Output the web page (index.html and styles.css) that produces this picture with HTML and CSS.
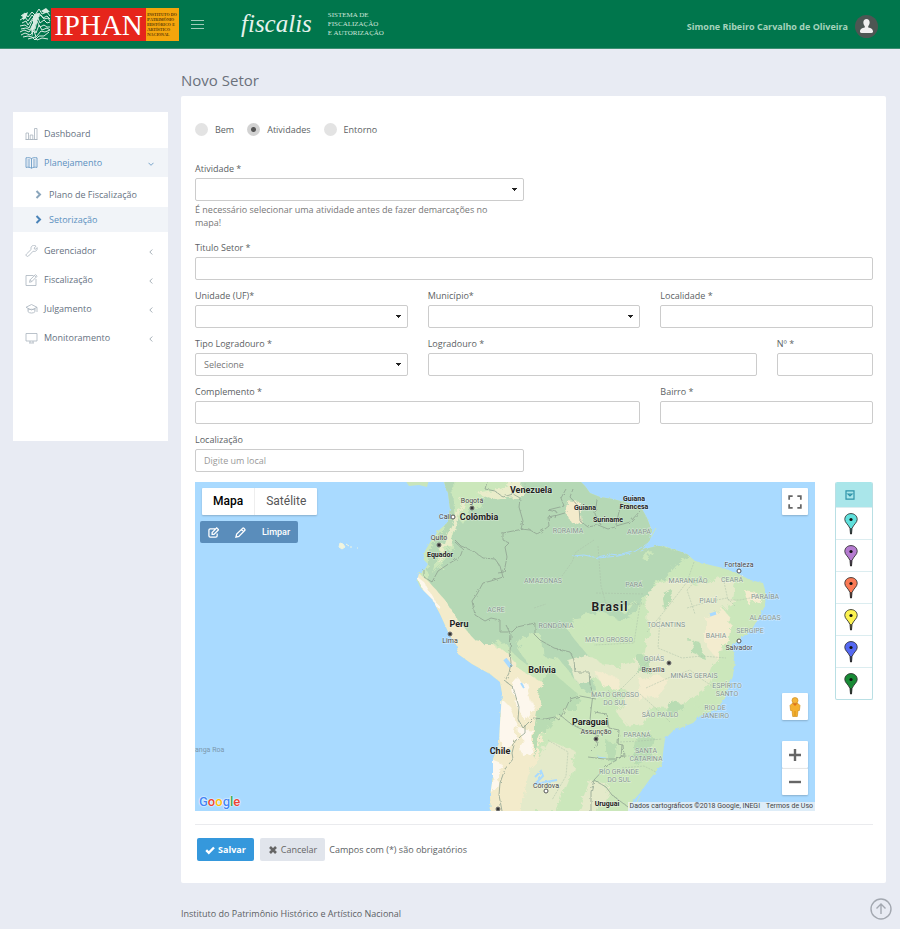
FILE: index.html
```html
<!DOCTYPE html>
<html lang="pt-BR">
<head>
<meta charset="utf-8">
<title>Novo Setor</title>
<link rel="stylesheet" href="styles.css">
</head>
<body>
<header class="topbar">
  <a class="brand" href="#" aria-label="IPHAN">
    <svg class="crest" viewBox="0 0 31 33" aria-hidden="true">
      <g fill="none" stroke="#d9ebe2" stroke-width="1">
        <path d="M1 8l4-3 3 4 4-5 3 3 4-6 3 5 5-2 3 4"/>
        <path d="M0 12l5-3 3 4 4-6 4 4 3-6 4 5 4-2 3 3"/>
        <path d="M2 15l4-2 2 4 5-7M18 9l3-2 3 4 4-1 2 3"/>
        <path d="M0 18l5-1 4 3 3-7 3-4 3 1 2 5 4-3 3 3 3-1"/>
        <path d="M1 21l5-1 4 2 3-6 2 5 2-8 3 6 4-2 3 2 3 0"/>
        <path d="M0 24l4-2 5 2 4-5 3 6 3-8 3 5 5-2 3 2"/>
        <path d="M1 27l4-2 5 2 4-4 2 6 5-6 4 1 5-2"/>
        <path d="M3 29l5-1 4 1 3 3 4-4 5 0 5-4"/>
        <path d="M8 31l7-2 2 3 5-2 6 1"/>
      </g>
      <path d="M13 8l4-3 3 1-2 5-4 10-2 8-1-9 2-5zM21 3l5-3 4 4-6 1zM2 7l6-3-2 6-3 2z" fill="#d9ebe2"/>
    </svg>
    <span class="brand-name">IPHAN</span>
    <span class="brand-full">Instituto do<br>Patrimônio<br>Histórico e<br>Artístico<br>Nacional</span>
  </a>
  <button class="menu-toggle" type="button" aria-label="Menu"><span></span><span></span><span></span></button>
  <span class="product">fiscalis</span>
  <span class="product-full">SISTEMA DE<br>FISCALIZAÇÃO<br>E AUTORIZAÇÃO</span>
  <a class="user" href="#">
    <span>Simone Ribeiro Carvalho de Oliveira</span>
    <svg viewBox="0 0 24 24" aria-hidden="true"><circle cx="12" cy="12" r="12" fill="#4d5653"/><path d="M12 4.300c2 0 3.300 1.400 3.300 3.400 0 1.600-.7 3-1.500 3.800v1.500c2.700.6 5 1.500 5 4.300 0 1-.6 1.500-1.500 1.500H6.700c-.9 0-1.500-.5-1.500-1.500 0-2.800 2.300-3.700 5-4.300v-1.500c-.8-.8-1.500-2.200-1.500-3.800 0-2 1.300-3.400 3.300-3.400z" fill="#efefef"/></svg>
  </a>
</header>

<div class="layout">
  <nav class="sidebar">
    <a class="item" href="#">
      <svg viewBox="0 0 12 12"><path d="M.5 5h2.500v6.500H.5zM4.700 7h2.600v4.500H4.700zM9 .5h2.500v11H9zM0 11.500h12"/></svg>
      <span>Dashboard</span></a>
    <a class="item active" href="#">
      <svg viewBox="0 0 12 12"><path d="M6 1.500C4.500.6 2.500.5.500.8v9.600c2-.3 4-.2 5.500.8 1.500-1 3.500-1.100 5.500-.8V.8C9.500.5 7.500.6 6 1.500zM6 1.500v9.700M2 3h2.500M2 5h2.500M2 7h2.500M2 9h2.500M7.500 3H10M7.500 5H10M7.500 7H10M7.500 9H10"/></svg>
      <span>Planejamento</span>
      <svg class="arrow" viewBox="0 0 6 6"><path d="M.5 1.800L3 4.300l2.500-2.500"/></svg></a>
    <div class="submenu">
      <a class="subitem" href="#"><svg viewBox="0 0 7 9"><path d="M1.500 1L5 4.500 1.500 8"/></svg><span>Plano de Fiscalização</span></a>
      <a class="subitem current" href="#"><svg viewBox="0 0 7 9"><path d="M1.500 1L5 4.500 1.500 8"/></svg><span>Setorização</span></a>
    </div>
    <a class="item" href="#">
      <svg viewBox="0 0 12 12"><path d="M10.500 1.200L8.700 3l.3 1 1 .3 1.600-1.700c.4 1.500-.2 3-1.600 3.600-.8.400-1.700.3-2.400 0L3 11c-.6.600-1.400.6-2 0s-.6-1.400 0-2l4.700-4.600c-.6-1.500 0-3 1.300-3.700 1.100-.6 2.400-.4 3.500.5z"/></svg>
      <span>Gerenciador</span>
      <svg class="arrow" viewBox="0 0 6 6"><path d="M4.300.5L1.800 3l2.500 2.500"/></svg></a>
    <a class="item" href="#">
      <svg viewBox="0 0 12 12"><path d="M8 1.500H.5v10h10V5M4 8.300l.6-2.500L10 .6l1.600 1.600-5.300 5.400zM4.700 5.800l1.600 1.700M9 1.600l1.600 1.600"/></svg>
      <span>Fiscalização</span>
      <svg class="arrow" viewBox="0 0 6 6"><path d="M4.300.5L1.800 3l2.500 2.500"/></svg></a>
    <a class="item" href="#">
      <svg viewBox="0 0 12 12"><path d="M6 1.500L.5 4.300 6 7l5.500-2.700zM2.500 5.500v3.200C4 10.500 8 10.500 9.500 8.700V5.500M11.500 4.300V9M2.500 7c2-1 5-1 7 0"/></svg>
      <span>Julgamento</span>
      <svg class="arrow" viewBox="0 0 6 6"><path d="M4.300.5L1.800 3l2.500 2.500"/></svg></a>
    <a class="item" href="#">
      <svg viewBox="0 0 12 12"><path d="M.5 1.500h11v7.500H.5zM4.500 9v1.800M7.500 9v1.800M3.500 11h5"/></svg>
      <span>Monitoramento</span>
      <svg class="arrow" viewBox="0 0 6 6"><path d="M4.300.5L1.800 3l2.500 2.500"/></svg></a>
  </nav>

  <main class="content">
    <h1>Novo Setor</h1>
    <form class="card">
      <div class="radios">
        <label><input type="radio" name="tipo">Bem</label>
        <label><input type="radio" name="tipo" checked>Atividades</label>
        <label><input type="radio" name="tipo">Entorno</label>
      </div>
      <div class="fields">
        <div class="field c6 row-end">
          <label for="atividade">Atividade *</label>
          <select id="atividade"><option></option></select>
          <p class="help">É necessário selecionar uma atividade antes de fazer demarcações no mapa!</p>
        </div>
        <div class="field c12"><label for="titulo">Titulo Setor *</label><input id="titulo" type="text"></div>
        <div class="field c4"><label for="uf">Unidade (UF)*</label><select id="uf"><option></option></select></div>
        <div class="field c4"><label for="municipio">Município*</label><select id="municipio"><option></option></select></div>
        <div class="field c4"><label for="localidade">Localidade *</label><input id="localidade" type="text"></div>
        <div class="field c4"><label for="tipolog">Tipo Logradouro *</label><select id="tipolog"><option>Selecione</option></select></div>
        <div class="field c6"><label for="logradouro">Logradouro *</label><input id="logradouro" type="text"></div>
        <div class="field c2"><label for="numero">Nº *</label><input id="numero" type="text"></div>
        <div class="field c8"><label for="complemento">Complemento *</label><input id="complemento" type="text"></div>
        <div class="field c4"><label for="bairro">Bairro *</label><input id="bairro" type="text"></div>
        <div class="field c6"><label for="local">Localização</label><input id="local" type="text" placeholder="Digite um local"></div>
      </div>

      <div class="map-row">
        <div class="map">
          <svg class="map-canvas" viewBox="195 482 620 329" preserveAspectRatio="xMidYMid slice">
            <defs>
              <clipPath id="land"><path id="coast" d="M443 480L448 493 450 509 447 523 438 531 432 539 425 551 423 559 428 564 425 569 419 574 417 580 420 587 432 599 440 614 450 636 457 646 458 654 472 664 490 674 500 682 502 693 500 723 499 743 493 759 493 776 490 796 491 813H627L633 801 640 793 650 779 662 764 663 753 665 739 673 731 693 723 700 716 717 709 725 698 728 689 733 676 735 659 732 646 740 639 752 629 758 619 765 606 766 593 763 583 750 580 737 573 723 568 710 565 695 561 687 554 670 548 660 545 649 548 640 552 650 540 652 531 647 518 642 509 628 503 613 499 600 497 590 493 585 486 579 480Z"/></clipPath>
              <filter id="rough" x="-5%" y="-5%" width="110%" height="110%"><feTurbulence type="fractalNoise" baseFrequency=".09" numOctaves="3" seed="4"/><feDisplacementMap in="SourceGraphic" scale="11"/></filter>
              <filter id="shore" x="-2%" y="-2%" width="104%" height="104%"><feTurbulence type="fractalNoise" baseFrequency=".25" numOctaves="2" seed="8"/><feDisplacementMap in="SourceGraphic" scale="3"/></filter>
            </defs>
            <rect x="195" y="482" width="620" height="329" fill="#a9daff"/>
            <path d="M405 480h24l-2 7-8-2-10 1z" fill="#c9e5bb"/>
            <g filter="url(#shore)"><g clip-path="url(#land)">
              <rect x="410" y="480" width="370" height="332" fill="#cbe7bb"/>
              <g filter="url(#rough)">
                <path fill="#b5d8b5" d="M442 470H660V545L690 555 676 566 664 580 650 588 640 600 636 614 618 620 600 612 585 618 566 628 575 640 592 660 596 690 584 692 560 660 540 655 528 666 512 652 505 642 480 646 460 622 440 600 428 580 430 545 445 525Z"/>
                <path fill="#cbe7bb" d="M452 470h68l-5 18-30 6-14 16-8 14-10-12zM528 632l14 4 2 26-16 2-11-16zM455 530l-14 18-8 26 9-8 10-20z"/>
                <path fill="#e9ecca" d="M494 500l28-4 2-14-12-1-14 8-22 4zM462 500l3 0-14 42-14 22 8-24z"/>
                <path fill="#f3ebcb" d="M566 500l14 2 2 24-10-3-7-13zM415 570l14 12 16 18 12 20 20 22 20 4 14 10 6 12 32 18-2 38-8 30-2 30-6 30H485V690L460 668 430 610z"/>
                <path fill="#fdf7ed" d="M415 575l10 8 14 24-8-2zM512 682l14-1 8 30-7 12-12-20zM500 700l10 6 8 20-4 16-10 12-6-20zM519 728l14 2-2 24-8 2zM492 760l10 4-8 30-5-5z"/>
                <path fill="#e4eaca" d="M646 590l30-12 20 8 22-8 18 6-4 20-18 8 8 18 2 26-12 28-16 10-16 14-26-2-12 18-16 2-8-14 12-20-30-12-24 2-6-20 20-6 14 8 20 2 20-8 4-26zM550 740l26 12-6 26-14 34h-36l8-36zM590 780l20 6-14 30h-20z"/>
                <path fill="#f3eccf" d="M706 618l16-10 8 10-2 20-10 22-12-14zM640 680l18-6 12 8-12 14-20 4zM744 590l12 2 6 10-14 2zM596 672l20 4 4 14-18-4z"/>
                <path fill="#b9dcb3" d="M548 668l18 16 14 12-4 14-14 0-18 22-10 26 0-36 6-30zM640 655l12 4-4 14-10 0zM670 700l14 4-10 14-8-8zM636 738l18-2-4 22-16 6zM606 742l12 2-2 18-10-4zM660 596l12-6 2 12-12 6zM690 640l10 2 4 16-12-4z"/>
                <path fill="#cbe7bb" d="M570 618l20-4 6 6-18 6zM592 638l14-2 14 8-20 4zM608 606l14 2 14-8-10 14zM640 556l14-3-6 10zM720 652l14-2-4 26-8 14-16 18-14 2 14-22z"/>
              </g>
              <g fill="none" stroke="#a9daff" stroke-width="1"><path d="M572 556l12-1 14 3 20-2 16-4 16-10"/><path d="M598 557l12-3 8 1 14-4"/><path d="M535 777l6-6 2 5-8 8 22-4" stroke-width="2"/><path d="M505 659l6 8" stroke-width="4"/><path d="M521 683l3 5" stroke-width="2"/><path d="M710 615l6-2" stroke-width="3"/><path d="M598 757l8 1"/></g>
            </g></g>
            <path d="M634 808l6-12M656 528l-5 9" stroke="#cbe7bb" fill="none"/>
            <g class="borders" filter="url(#shore)">
              <path d="M487 482l-2 7 10 2 8 6 10-3 7 4-1 9 4 14-2 8 9 1 7 4 8-5 4-3-1-9 10-2 10-3"/>
              <path d="M555 518l2-6-9-2 16-4-3-8 5-9M573 489l-3 8 9 10 1 14 8 6 10-2 10 4 7-2M597 500l-2 14 5 10M621 503l-5 22M616 526l14-4 11-12"/>
              <path d="M523 529l-20 4v7l6 3-4 4 2 10-3 15-6 1M455 540l6 6 14 6 8 6 12 1 5 7 3 11-12 4-8 2-6 11-5 7 3 14 10 6 6-3 9 2v12h12l5-5 18-4v12l5 5 14 8 16 4 4 8 1 12h14l1 12 3 10-2 16-1 10"/>
              <path d="M424 570v7l8 5 6-11 12-8 10-6 3-8-8-7"/>
              <path d="M506 625l5 10-1 16 1 12-2 10-4 8 8 6 6 20-1 12 5 9 10-10 12 1 10-2 4 3 7-12 4-9 10-3 16 3"/>
              <path d="M525 725v8l-10 8-3 12 1 6-8 10-5 14-1 12 3 16M559 714l12 10 8 4 20 8M594 712l13 2 2 14 10 2-1 14 5 1 1 11-8 3-12 0-16-2M598 736l-2 10-6 6M622 745l-1 12-14 9-13 14M594 780l-3 12v20M594 780l12 7 6 8 16 12"/>
            </g>
            <g class="state-borders">
              <path d="M525 480v10M534 608l12-4M596 593l48 1M598 546l3 40 5 18 38 0M640 605l-2 12-4 26-40 2M594 540l-18 12-4 10-10 14M694 562l-7 20-20 26-20 24M700 576l-13 14 8 24M687 608l20-6 20-4 8 8M724 582l4 18 12 0 20-4M660 618l-2 30 24 10 20-2 24 2M646 688l22-10 22-8 10 8 18 12M652 658l-14 14-20 20M640 694l22 20 8 8M608 690l16 16M620 742l20-1 22-2M622 756l18 0 22 2M622 768l22-2 12 6M548 740l20 12-2 24-14 24"/>
            </g>
            <path d="M340 543l3 1 2 3-3 2-3-2zM346 544l3 2M350 547h2M357 548h1" fill="#f1f5df" stroke="#f1f5df"/>
            <g class="dots">
              <circle cx="472" cy="508" r="2"/><circle cx="439" cy="545" r="2"/><circle cx="450" cy="634" r="2"/><circle cx="669" cy="663" r="2"/><circle cx="596" cy="739" r="2"/><circle cx="498" cy="809" r="2"/>
            </g>
            <g class="rings"><circle cx="453" cy="517" r="2"/><circle cx="739" cy="571" r="2"/><circle cx="739" cy="641" r="2"/><circle cx="546" cy="791" r="2"/></g>
            <g class="state"><text x="568" y="533">RORAIMA</text><text x="639" y="534">AMAPÁ</text><text x="543" y="583">AMAZONAS</text><text x="634" y="587">PARÁ</text><text x="688" y="583">MARANHÃO</text><text x="732" y="582">CEARÁ</text><text x="708" y="603">PIAUÍ</text><text x="765" y="599">PARAÍBA</text><text x="496" y="612">ACRE</text><text x="765" y="620">ALAGOAS</text><text x="750" y="633">SERGIPE</text><text x="556" y="628">RONDÔNIA</text><text x="666" y="627">TOCANTINS</text><text x="716" y="638">BAHIA</text><text x="609" y="642">MATO GROSSO</text><text x="654" y="661">GOIÁS</text><text x="694" y="678">MINAS GERAIS</text><text x="727" y="688">ESPÍRITO</text><text x="727" y="696">SANTO</text><text x="615" y="697">MATO GROSSO</text><text x="615" y="705">DO SUL</text><text x="715" y="710">RIO DE</text><text x="715" y="718">JANEIRO</text><text x="660" y="717">SÃO PAULO</text><text x="637" y="737">PARANÁ</text><text x="646" y="753">SANTA</text><text x="646" y="761">CATARINA</text><text x="619" y="774">RIO GRANDE</text><text x="619" y="782">DO SUL</text></g>
            <g class="city"><text x="472" y="503">Bogotá</text><text x="445" y="519">Cali</text><text x="439" y="540">Quito</text><text x="450" y="643">Lima</text><text x="653" y="672">Brasília</text><text x="739" y="567">Fortaleza</text><text x="739" y="650">Salvador</text><text x="596" y="734">Assunção</text><text x="546" y="788">Córdova</text></g>
            <g class="country"><text x="531" y="493">Venezuela</text><text x="479" y="520">Colômbia</text><text x="459" y="627">Peru</text><text x="542" y="673">Bolívia</text><text x="590" y="725">Paraguai</text><text x="500" y="754">Chile</text></g>
            <g class="country small"><text x="585" y="510">Guiana</text><text x="634" y="501">Guiana</text><text x="634" y="509">Francesa</text><text x="608" y="522">Suriname</text><text x="440" y="557">Equador</text><text x="607" y="806">Uruguai</text></g>
            <text class="home" x="610" y="611">Brasil</text>
            <text class="faint" x="195" y="752">anga Roa</text>
          </svg>
          <div class="map-type"><button type="button" class="on">Mapa</button><button type="button">Satélite</button></div>
          <div class="draw-tools">
            <button type="button" aria-label="Editar"><svg viewBox="0 0 12 12"><path d="M8 2H2.500C1.500 2 1 2.500 1 3.500v6c0 1 .5 1.500 1.500 1.500h6c1 0 1.500-.5 1.500-1.500V7M4.500 8V6L9.500 1l2 2-5 5z"/></svg></button>
            <button type="button" aria-label="Desenhar"><svg viewBox="0 0 12 12"><path d="M1 11l.8-3.200L8.500 1.200c.7-.7 3 1.600 2.300 2.300L4.200 10.200zM7 2.700L9.300 5"/></svg></button>
            <button type="button">Limpar</button>
          </div>
          <button type="button" class="ctl full" aria-label="Tela cheia"><svg viewBox="0 0 12 12"><path d="M1 4V1h3M8 1h3v3M11 8v3H8M4 11H1V8"/></svg></button>
          <div class="ctl-stack">
            <button type="button" class="ctl" aria-label="Street View"><svg class="pegman" viewBox="0 0 12 20"><circle cx="6" cy="3.500" r="3" fill="#f5b53b" stroke="#c98613" stroke-width=".6"/><path d="M3 6.500h6l2 2-.6 5H9l-.7 6H3.700L3 13.500H1.600L1 8.500z" fill="#f5b02e" stroke="#c98613" stroke-width=".6"/><path d="M3.500 6.500h5L6 9z" fill="#e0701a" stroke="none"/><path d="M6 14v5" stroke="#c98613" stroke-width=".7"/></svg></button>
            <div class="zoom">
              <button type="button" class="ctl" aria-label="Aumentar"><svg viewBox="0 0 12 12"><path d="M6 0v12M0 6h12"/></svg></button>
              <button type="button" class="ctl" aria-label="Diminuir"><svg viewBox="0 0 12 12"><path d="M0 6h12"/></svg></button>
            </div>
          </div>
          <span class="google"><b>G</b><b>o</b><b>o</b><b>g</b><b>l</b><b>e</b></span>
          <div class="credits"><span>Dados cartográficos ©2018 Google, INEGI</span><a href="#">Termos de Uso</a></div>
        </div>
        <div class="palette">
          <svg class="defs"><symbol id="pin" viewBox="0 0 14 22"><path d="M7 .6c3.700 0 6.200 2.500 6.200 5.900 0 3.100-3.700 5.100-5.200 9L7.500 21h-1L6 15.500c-1.500-3.900-5.200-5.900-5.200-9C.8 3.100 3.300.6 7 .6z" stroke="#333" stroke-width=".9"/><path d="M7 15v6" stroke="#222" stroke-width="1.200"/><circle cx="7" cy="6.500" r="1.600" fill="#111"/></symbol></svg>
          <button type="button" class="palette-head" aria-label="Recolher"><svg viewBox="0 0 10 10"><path d="M1 .8h8v8.400H1zM3 4h4L5 6z"/></svg></button>
          <button type="button" aria-label="Ciano"><svg class="cyan"><use href="#pin"/></svg></button>
          <button type="button" aria-label="Roxo"><svg class="purple"><use href="#pin"/></svg></button>
          <button type="button" aria-label="Laranja"><svg class="orange"><use href="#pin"/></svg></button>
          <button type="button" aria-label="Amarelo"><svg class="yellow"><use href="#pin"/></svg></button>
          <button type="button" aria-label="Azul"><svg class="blue"><use href="#pin"/></svg></button>
          <button type="button" aria-label="Verde"><svg class="green"><use href="#pin"/></svg></button>
        </div>
      </div>

      <div class="actions">
        <button class="btn save" type="button"><svg viewBox="0 0 10 10"><path d="M1.200 5.200l2.600 2.600L9 2.500" stroke-width="2.400"/></svg>Salvar</button>
        <button class="btn cancel" type="button"><svg viewBox="0 0 10 10"><path d="M2 2l6 6M8 2L2 8" stroke-width="2.600"/></svg>Cancelar</button>
        <span>Campos com (*) são obrigatórios</span>
      </div>
    </form>
  </main>
</div>
<footer class="footer">
  <span>Instituto do Patrimônio Histórico e Artístico Nacional</span>
  <a href="#" aria-label="Voltar ao topo"><svg viewBox="0 0 22 22"><circle cx="11" cy="11" r="10"/><path d="M11 16V6M6.500 10.500L11 6l4.500 4.500"/></svg></a>
</footer>
</body>
</html>
```
FILE: styles.css
```css
* { box-sizing: border-box; }
body {
  margin: 0;
  background: #e8ebf3;
  color: #5c5f64;
  font: 9px/13px "Open Sans", sans-serif;
}
a { color: inherit; text-decoration: none; }
button, input, select { font: inherit; color: inherit; margin: 0; }
button { border: 0; padding: 0; background: none; cursor: pointer; }
svg { display: block; flex: none; }

.topbar {
  display: flex;
  align-items: center;
  height: 49px;
  padding: 0 22px 0 20px;
  background: #00764c;
  border-bottom: 1px solid #3c8f72;
}
.brand { display: flex; align-items: center; }
.crest { width: 31px; height: 33px; }
.brand-name {
  height: 33px;
  width: 95px;
  background: #e6251c;
  color: #fff;
  font: 29px/34px "Liberation Serif", serif;
  text-align: center;
}
.brand-full {
  width: 33px;
  height: 33px;
  padding: 4px 1px;
  background: #f4a50c;
  color: #5c3a08;
  font: small-caps bold 5px/5px "Liberation Serif", serif;
  white-space: nowrap;
}
.menu-toggle { display: grid; gap: 3px; width: 13px; margin-left: 12px; }
.menu-toggle span { height: 1px; background: #9fcbb9; }
.product { margin-left: 37px; color: #e6f2ec; font: italic 25px/32px "Liberation Serif", serif; }
.product-full { margin-left: 16px; color: #cfe5db; font: 7px/9px "Liberation Serif", serif; }
.user { display: flex; align-items: center; gap: 7px; margin: 5px 0 0 auto; color: #a5d3bd; font-weight: 700; }
.user svg { width: 23px; height: 23px; }

.layout { display: flex; align-items: flex-start; gap: 13px; padding: 22px 14px 0 13px; }
.sidebar { flex: 0 0 155px; min-height: 329px; margin-top: 41px; padding-top: 7px; background: #fff; color: #66727f; }
.item { display: flex; align-items: center; gap: 6px; height: 29px; padding: 0 14px 0 12px; }
.item svg { width: 13px; height: 12px; fill: none; stroke: #a9b4be; stroke-width: .8; }
.item .arrow { width: 6px; height: 6px; margin: 2px 0 0 auto; stroke: #8e9aa5; }
.active, .current { background: #f1f4f8; color: #5b90bf; }
.item.active svg, .item.active .arrow { stroke: #5b90bf; }
.submenu { padding: 5px 0 4px; }
.subitem { display: flex; align-items: center; gap: 7px; height: 25px; padding-left: 22px; }
.subitem svg { width: 7px; height: 9px; fill: none; stroke: #8aa5bb; stroke-width: 2; }
.current svg { stroke: #4a83b8; }

.content { flex: 1; min-width: 0; }
h1 { margin: 0; font-size: 15px; line-height: 19px; font-weight: 400; color: #6b717c; }
.card { margin-top: 6px; padding: 26px 13px 22px 14px; background: #fff; border-radius: 2px; }
.radios { display: flex; gap: 13px; height: 14px; }
.radios label { display: flex; align-items: center; gap: 7px; }
.radios input { appearance: none; width: 13px; height: 13px; border-radius: 50%; background: #e3e3e3; }
.radios input:checked { background: radial-gradient(circle, #555 0 2px, #d2d2d2 3px); }

.fields { display: grid; grid-template-columns: repeat(12, 1fr); gap: 10px 20px; margin-top: 26px; }
.field { display: flex; flex-direction: column; gap: 2px; min-width: 0; }
.field label { line-height: 14px; }
.c2 { grid-column: span 2; }
.c4 { grid-column: span 4; }
.c6 { grid-column: span 6; }
.c8 { grid-column: span 8; }
.c12 { grid-column: span 12; }
.field input, .field select {
  width: 100%;
  height: 23px;
  margin-bottom: -1px;
  padding: 0 8px;
  border: 1px solid #ccc;
  border-radius: 2px;
  background: #fff;
  color: #777;
}
.field select {
  appearance: none;
  background: linear-gradient(#222, #222) no-repeat right 6px top 9px / 5px 1px,
    linear-gradient(#222, #222) no-repeat right 7px top 10px / 3px 1px,
    linear-gradient(#222, #222) no-repeat right 8px top 11px / 1px 1px, #fff;
}
.field ::placeholder { color: #999; opacity: 1; }
.help { margin: 1px 0 2px; padding-right: 20px; color: #777; }

.map-row { display: flex; align-items: flex-start; gap: 20px; margin-top: 11px; }
.map { position: relative; flex: 1; min-width: 0; height: 329px; overflow: hidden; font-family: Roboto, sans-serif; }
.map-canvas { width: 100%; height: 100%; font-family: Roboto, sans-serif; }
.map-canvas text { text-anchor: middle; fill: #444; stroke: #fff; stroke-opacity: .5; stroke-width: 1; paint-order: stroke; }
.map-canvas .country text { font-size: 9px; font-weight: 700; fill: #222; }
.map-canvas .small text { font-size: 7px; }
.map-canvas .home { font-size: 12px; font-weight: 700; fill: #222; letter-spacing: 1px; }
.map-canvas .city text { font-size: 7px; }
.map-canvas .state text { font-size: 7px; fill: #84938d; }
.map-canvas .faint { font-size: 7px; fill: #7c98ad; text-anchor: start; stroke: none; }
.borders { fill: none; stroke: #8fa291; stroke-width: .8; }
.state-borders { fill: none; stroke: #a8bea6; stroke-width: .5; stroke-dasharray: 2 1; }
.dots circle { fill: #333; stroke: #777; stroke-width: 1; }
.rings circle { fill: #fff; stroke: #555; stroke-width: 1; }

.map-type { position: absolute; top: 6px; left: 7px; display: flex; height: 27px; background: #fff; border-radius: 1px; box-shadow: 0 1px 2px #0003; font-size: 12px; color: #565656; }
.map-type button { padding: 0 11px; }
.map-type .on { color: #000; font-weight: 500; border-right: 1px solid #eee; }
.draw-tools { position: absolute; top: 39px; left: 5px; display: flex; align-items: center; gap: 16px; height: 22px; padding: 0 8px; background: #5a8dbb; border-radius: 2px; color: #fff; font-size: 9px; font-weight: 500; }
.draw-tools svg { width: 11px; height: 11px; fill: none; stroke: #fff; stroke-width: 1.4; }
.ctl { display: grid; place-items: center; width: 26px; height: 27px; background: #fff; border-radius: 1px; box-shadow: 0 1px 2px #0003; }
.ctl svg { width: 12px; height: 12px; fill: none; stroke: #666; stroke-width: 2.400; }
.ctl .pegman { width: 12px; height: 20px; }
.full { position: absolute; top: 6px; right: 7px; }
.full svg { width: 14px; height: 14px; stroke-width: 1.500; }
.ctl-stack { position: absolute; right: 7px; bottom: 16px; display: grid; gap: 21px; }
.zoom .ctl + .ctl { border-top: 1px solid #e6e6e6; }
.google { position: absolute; left: 4px; bottom: 1px; font-size: 13px; line-height: 16px; text-shadow: 0 0 1px #fff, 0 0 1px #fff, 0 0 2px #fff; }
.google b { font-weight: 500; color: #4285f4; }
.google b:nth-child(2), .google b:nth-child(6) { color: #ea4335; }
.google b:nth-child(3) { color: #fbbc05; }
.google b:nth-child(5) { color: #34a853; }
.credits { position: absolute; right: 0; bottom: 0; display: flex; gap: 6px; padding: 0 2px; background: #f5f5f5b3; color: #444; font-size: 7px; line-height: 9px; }

.palette { flex: 0 0 38px; border: 1px solid #b9dfe4; border-top: 0; border-radius: 2px; overflow: hidden; }
.palette button { display: flex; align-items: center; width: 100%; height: 32px; padding-left: 8px; border-top: 1px solid #dcedf0; }
.palette .palette-head { height: 25px; padding-left: 9px; background: #aae6ea; border: 0; }
.palette-head svg { width: 10px; height: 10px; fill: none; stroke: #2e93a8; stroke-width: 1.200; }
.palette button:not(.palette-head) svg { width: 14px; height: 22px; }
.palette .defs { position: absolute; width: 0; height: 0; }
.cyan { fill: #5fe0dc; }
.purple { fill: #b57bd0; }
.orange { fill: #fa7a55; }
.yellow { fill: #fbf250; }
.blue { fill: #5468f2; }
.green { fill: #188a35; }

.actions { display: flex; align-items: center; gap: 6px; margin-top: 13px; padding: 13px 2px 0; border-top: 1px solid #eaebee; }
.actions > span { margin-left: -2px; }
.btn { display: flex; align-items: center; gap: 3px; height: 23px; padding: 0 8px; border-radius: 2px; }
.btn svg { width: 10px; height: 10px; fill: none; stroke: currentColor; }
.save { background: #3598dc; color: #fff; font-weight: 700; }
.cancel { background: #e1e5ec; color: #666; }

.footer { display: flex; align-items: flex-end; justify-content: space-between; padding: 15px 8px 7px 181px; }
.footer svg { width: 22px; height: 22px; fill: none; stroke: #a3a8b0; stroke-width: 1.400; }
```
